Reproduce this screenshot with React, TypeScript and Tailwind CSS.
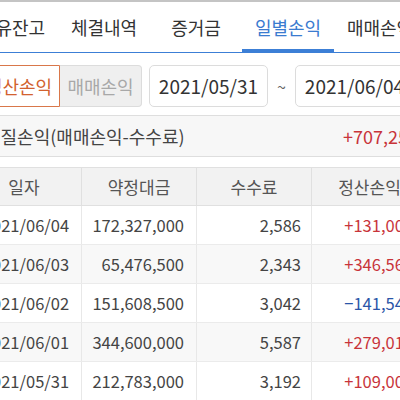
const tabs = ['보유잔고', '체결내역', '증거금', '일별손익', '매매손익']

interface Row {
  date: string
  amount: string
  fee: string
  pnl: string
}

const rows: Row[] = [
  { date: '2021/06/04', amount: '172,327,000', fee: '2,586', pnl: '+131,004' },
  { date: '2021/06/03', amount: '65,476,500', fee: '2,343', pnl: '+346,567' },
  { date: '2021/06/02', amount: '151,608,500', fee: '3,042', pnl: '−141,542' },
  { date: '2021/06/01', amount: '344,600,000', fee: '5,587', pnl: '+279,013' },
  { date: '2021/05/31', amount: '212,783,000', fee: '3,192', pnl: '+109,008' },
]

export default function App() {
  return (
    <div className="w-[400px] h-[400px] overflow-hidden bg-white border-t-2 border-[#c4c4c4] font-['Noto_Sans_CJK_KR',sans-serif] text-[#333]">
      {/* Tabs */}
      <div className="h-[51px] border-b border-[#3c7fd6]">
        <div className="flex -ml-[34px] w-[470px] h-[50px]">
          {tabs.map((t, i) => (
            <div
              key={t}
              className={
                i === 3
                  ? 'w-[92px] shrink-0 flex items-center justify-center text-[18px] text-[#3a7bd0] border-b-[3px] border-[#3c7fd6] pt-[3px]'
                  : 'w-[92px] shrink-0 flex items-center justify-center text-[18px] text-[#333]'
              }
            >
              {t}
            </div>
          ))}
        </div>
      </div>

      {/* Filters */}
      <div className="flex items-center mt-[12px] -ml-[22px] w-[440px] h-[42px]">
        <div className="w-[82px] h-full flex items-center justify-center border border-[#d9774a] rounded-l-[4px] text-[18px] text-[#d2622f] bg-white">
          정산손익
        </div>
        <div className="w-[82px] h-full flex items-center justify-center border border-l-0 border-[#dcdcdc] rounded-r-[4px] text-[18px] text-[#a8a8a8] bg-[#efefef]">
          매매손익
        </div>
        <div className="ml-[7px] w-[119px] h-full flex items-center justify-center border border-[#dcdcdc] rounded-[5px] text-[19px] text-[#333]">
          2021/05/31
        </div>
        <div className="w-[27px] text-center text-[16px] text-[#666]">~</div>
        <div className="w-[119px] h-full flex items-center justify-center border border-[#dcdcdc] rounded-[5px] text-[19px] text-[#333]">
          2021/06/04
        </div>
      </div>

      {/* Summary */}
      <div className="flex items-center justify-between mt-[8px] -ml-[24px] w-[442px] h-[42px] border-y border-[#dedede] bg-[#f7f7f7] pl-[8px]">
        <span className="text-[18px] text-[#444]">실질손익(매매손익-수수료)</span>
        <span className="text-[18px] text-[#c8343a]">+707,259</span>
      </div>

      {/* Table */}
      <div className="mt-[10px] -ml-[33px] w-[460px] border-t border-[#e0e0e0]">
        <div className="grid grid-cols-4 h-[38px] bg-[#f2f2f2] border-b border-[#e0e0e0] text-[17px] text-[#555]">
          <div className="flex items-center justify-center border-r border-[#e0e0e0]">일자</div>
          <div className="flex items-center justify-center border-r border-[#e0e0e0]">약정대금</div>
          <div className="flex items-center justify-center border-r border-[#e0e0e0]">수수료</div>
          <div className="flex items-center justify-center">정산손익</div>
        </div>
        {rows.map((r, i) => (
          <div
            key={r.date}
            className={
              i % 2 === 1
                ? 'grid grid-cols-4 h-[39px] bg-[#f8f8f8] border-b border-[#ebebeb] text-[16.5px] text-[#444]'
                : 'grid grid-cols-4 h-[39px] bg-white border-b border-[#ebebeb] text-[16.5px] text-[#444]'
            }
          >
            <div className="flex items-center justify-center pl-[4px] border-r border-[#e8e8e8]">{r.date}</div>
            <div className="flex items-center justify-end pr-[12px] border-r border-[#e8e8e8]">{r.amount}</div>
            <div className="flex items-center justify-end pr-[10px] border-r border-[#e8e8e8]">{r.fee}</div>
            <div
              className={
                r.pnl.startsWith('+')
                  ? 'flex items-center justify-end pr-[14px] text-[#c8343a]'
                  : 'flex items-center justify-end pr-[14px] text-[#2a55a8]'
              }
            >
              {r.pnl}
            </div>
          </div>
        ))}
      </div>
    </div>
  )
}
